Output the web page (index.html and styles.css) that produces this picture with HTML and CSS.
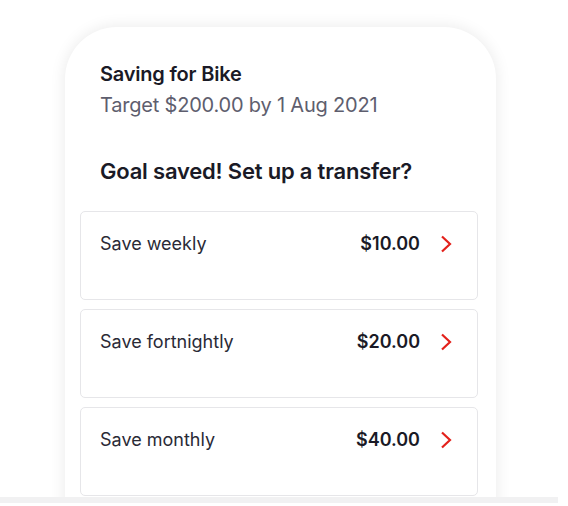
FILE: index.html
```html
<!DOCTYPE html>
<html>
<head>
<meta charset="utf-8">
<link rel="stylesheet" href="styles.css">
</head>
<body>
<div class="stage">
  <div class="phone">
    <div class="goal">
      <div class="goal-title">Saving for Bike</div>
      <div class="goal-sub">Target $200.00 by 1 Aug 2021</div>
    </div>
    <h2 class="prompt">Goal saved! Set up a transfer?</h2>
    <div class="options">
      <div class="option">
        <span class="opt-label">Save weekly</span>
        <span class="opt-amount">$10.00</span>
        <svg class="chev" width="12" height="18" viewBox="0 0 12 18"><path d="M2 1.5 L10 9 L2 16.5" fill="none" stroke="#e3211b" stroke-width="2.2"/></svg>
      </div>
      <div class="option">
        <span class="opt-label">Save fortnightly</span>
        <span class="opt-amount">$20.00</span>
        <svg class="chev" width="12" height="18" viewBox="0 0 12 18"><path d="M2 1.5 L10 9 L2 16.5" fill="none" stroke="#e3211b" stroke-width="2.2"/></svg>
      </div>
      <div class="option">
        <span class="opt-label">Save monthly</span>
        <span class="opt-amount">$40.00</span>
        <svg class="chev" width="12" height="18" viewBox="0 0 12 18"><path d="M2 1.5 L10 9 L2 16.5" fill="none" stroke="#e3211b" stroke-width="2.2"/></svg>
      </div>
    </div>
  </div>
</div>
<div class="baseline"></div>
</body>
</html>
```

FILE: styles.css
```css
html, body {
  margin: 0;
  padding: 0;
  background: #ffffff;
  font-family: Inter, "Noto Sans", sans-serif;
  color: #1c1c28;
}
.stage {
  height: 497px;
  overflow: hidden;
  padding-top: 27px;
  box-sizing: border-box;
}
.phone {
  margin-left: 65px;
  width: 431px;
  height: 520px;
  background: #fff;
  border-radius: 52px 52px 0 0;
  box-shadow: 0 0 16px rgba(0, 0, 0, 0.09);
  padding: 34px 18px 0 15px;
  box-sizing: border-box;
}
.goal {
  padding-left: 20px;
}
.goal-title {
  font-size: 20px;
  font-weight: 600;
  line-height: 26px;
  letter-spacing: -0.2px;
  color: #1a1a26;
}
.goal-sub {
  font-size: 20px;
  font-weight: 400;
  line-height: 26px;
  margin-top: 5px;
  letter-spacing: -0.2px;
  color: #5e5e6e;
}
.prompt {
  margin: 38px 0 0 20px;
  font-size: 22px;
  font-weight: 600;
  line-height: 30px;
  letter-spacing: -0.2px;
  color: #1a1a26;
}
.options {
  margin-top: 25px;
  display: flex;
  flex-direction: column;
  gap: 9px;
}
.option {
  height: 89px;
  border: 1px solid #e6e6e9;
  border-radius: 5px;
  box-sizing: border-box;
  display: flex;
  align-items: flex-start;
  padding: 20px 25px 0 19px;
  font-size: 18px;
  line-height: 24px;
}
.opt-label {
  flex: 1;
  color: #2a2a36;
}
.opt-amount {
  font-weight: 600;
  color: #1a1a26;
  margin-right: 20px;
}
.chev {
  margin-top: 3px;
}
.baseline {
  height: 6px;
  width: 558px;
  background: #f1f1f2;
}
```
